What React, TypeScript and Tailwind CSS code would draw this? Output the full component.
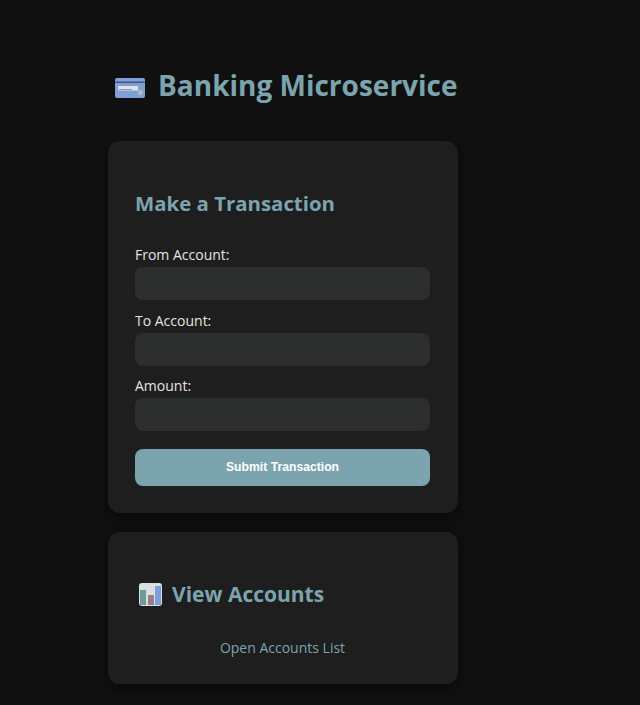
const CardIcon = () => (
  <svg viewBox="0 0 30 20" className="w-[30px] h-[20px] shrink-0 mt-[6px]">
    <rect x="0" y="0" width="30" height="20" rx="2" fill="#7f9fd6" />
    <rect x="0" y="3.5" width="30" height="1.5" fill="#46587a" />
    <rect x="3" y="8" width="20" height="4.5" fill="#dfe4ec" />
    <rect x="4" y="11" width="13" height="1" fill="#8d9aae" />
    <circle cx="25.5" cy="14.5" r="2.4" fill="#b9bcc2" />
  </svg>
);

const BuildingIcon = () => (
  <svg viewBox="0 0 23 23" className="w-[23px] h-[23px] shrink-0">
    <rect x="0" y="0" width="23" height="23" rx="3" fill="#d9dfe2" />
    <rect x="1" y="7" width="6" height="15" fill="#6f9a96" />
    <rect x="9" y="12" width="6" height="10" fill="#9a7f86" />
    <rect x="16" y="3" width="6" height="19" fill="#7d9fdc" />
  </svg>
);

const Field = ({ label }: { label: string }) => (
  <div className="mb-[10.5px]">
    <label className="block text-[14px] leading-[20px] text-[#e4e4e4] mb-[2px]">{label}</label>
    <input className="block w-full h-[33px] rounded-lg bg-[#2c2e2e]" />
  </div>
);

export default function App() {
  return (
    <div className="min-h-[705px] bg-[#101010] font-['Open_Sans','Noto_Sans',sans-serif]">
      <div className="w-[350px] ml-[108px] pt-[65px]">
        <h1 className="flex items-center gap-[13px] pl-[7px] h-[40px] whitespace-nowrap text-[28px] leading-[40px] font-bold text-[#7ba4ae]">
          <CardIcon />
          Banking Microservice
        </h1>
        <div className="mt-[36px] h-[372px] rounded-xl bg-[#1e1e1e] pl-[27px] pr-[28px] pt-[47px] shadow-[0_4px_12px_rgba(0,0,0,0.5)]">
          <h2 className="text-[20.4px] leading-[30px] font-bold text-[#7ba4ae] mb-[27px]">Make a Transaction</h2>
          <Field label="From Account:" />
          <Field label="To Account:" />
          <Field label="Amount:" />
          <button className="block w-full h-[37px] mt-[18px] rounded-lg bg-[#7ba4ae] text-white text-[12.2px] font-bold font-['Liberation_Sans',sans-serif]">
            Submit Transaction
          </button>
        </div>
        <div className="mt-[19px] h-[152px] rounded-xl bg-[#1e1e1e] pl-[27px] pr-[28px] pt-[47px] shadow-[0_4px_12px_rgba(0,0,0,0.5)]">
          <h2 className="flex items-center gap-[10px] pl-[4px] text-[21px] leading-[30px] font-bold text-[#7ba4ae]">
            <BuildingIcon />
            View Accounts
          </h2>
          <a className="block mt-[29px] text-center text-[14px] leading-[20px] text-[#7ba4ae]">Open Accounts List</a>
        </div>
      </div>
    </div>
  );
}
